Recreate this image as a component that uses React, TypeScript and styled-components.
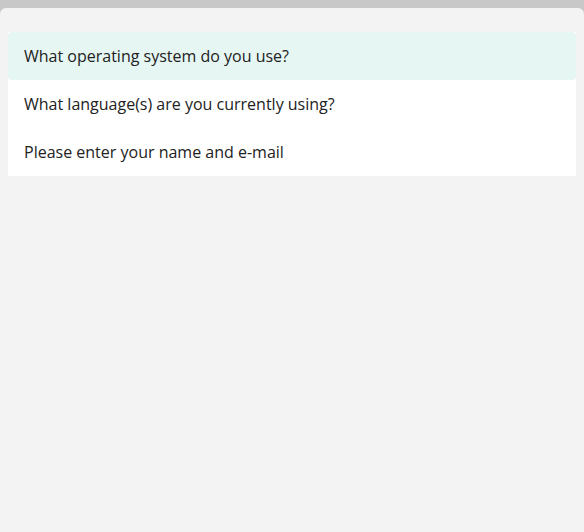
import React from "react";
import styled, { createGlobalStyle } from "styled-components";

const Global = createGlobalStyle`
  html, body { margin: 0; padding: 0; background: #c8c8c8; }
  body { font-family: "Open Sans", "Liberation Sans", sans-serif; }
`;

const Panel = styled.div`
  margin-top: 8px;
  min-height: calc(100vh - 8px);
  background: #f3f3f3;
  border-radius: 6px 6px 0 0;
  padding: 24px 8px 0 8px;
  box-sizing: border-box;
`;

const List = styled.ul`
  list-style: none;
  margin: 0;
  padding: 0;
  background: #ffffff;
  display: flex;
  flex-direction: column;
`;

const Item = styled.li<{ $active?: boolean }>`
  height: 48px;
  display: flex;
  align-items: center;
  padding: 0 16px;
  font-size: 16px;
  color: #222222;
  border-radius: 4px;
  background: ${(p) => (p.$active ? "#e6f6f2" : "transparent")};
`;

const questions = [
  "What operating system do you use?",
  "What language(s) are you currently using?",
  "Please enter your name and e-mail",
];

export default function App() {
  return (
    <>
      <Global />
      <Panel>
        <List>
          {questions.map((q, i) => (
            <Item key={q} $active={i === 0}>
              {q}
            </Item>
          ))}
        </List>
      </Panel>
    </>
  );
}
